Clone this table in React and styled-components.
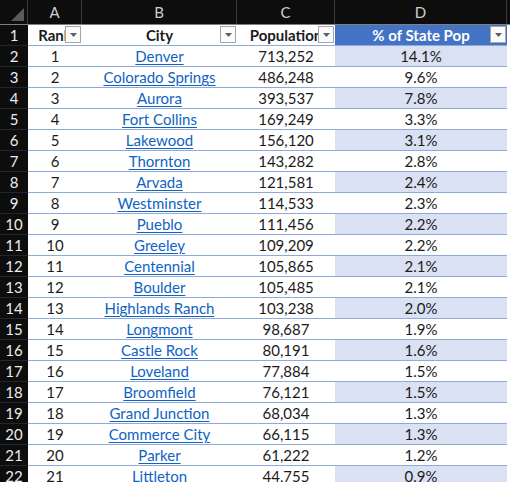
import React from "react";
import styled, { createGlobalStyle } from "styled-components";

const GlobalStyle = createGlobalStyle`
body {
  margin: 0;
  background: #ffffff;
  font-family: Lato, "Noto Sans", sans-serif;
}
`;

const COLS = "28px 54px 155px 98px 172px 1fr";

const Sheet = styled.div`
width: 510px;
height: 482px;
overflow: hidden;
background: #ffffff;
`;

const HeadRow = styled.div`
display: grid;
grid-template-columns: ${COLS};
height: 24px;
background: #0d0d0d;
border-bottom: 1px solid #7f7f7f;
`;

const Corner = styled.div`
position: relative;
border-right: 1px solid #3a3a3a;
`;

const CornerMark = styled.svg`
position: absolute;
right: 3px;
bottom: 3px;
`;

const ColLetter = styled.div`
display: flex;
align-items: center;
justify-content: center;
color: #cfcfcf;
font-size: 15px;
border-right: 1px solid #3a3a3a;
`;

const Row = styled.div`
display: grid;
grid-template-columns: ${COLS};
height: 21px;
`;

const RowNum = styled.div`
display: flex;
align-items: flex-end;
justify-content: center;
padding-bottom: 1px;
box-sizing: border-box;
background: #0d0d0d;
color: #ececec;
font-size: 15px;
border-bottom: 1px solid #262626;
`;

const Cell = styled.div`
position: relative;
display: flex;
align-items: flex-end;
justify-content: center;
padding-bottom: 1px;
box-sizing: border-box;
overflow: hidden;
white-space: nowrap;
font-size: 15px;
color: #1b1b1b;
background: ${(p) => (p.$shade ? "#d9e1f2" : p.$head ? "#4472c4" : "#ffffff")};
border-bottom: 1px solid #8ea9db;
`;

const Blank = styled.div`
background: #ffffff;
`;

const HeadText = styled.span`
font-weight: 700;
color: ${(p) => (p.$light ? "#ffffff" : "#1b1b1b")};
`;

const FilterButton = styled.div`
position: absolute;
right: 1px;
top: 1px;
width: 16px;
height: 17px;
box-sizing: border-box;
border: 1px solid #a6a6a6;
background: #fbfbfb;
display: flex;
align-items: center;
justify-content: center;
`;

const Link = styled.a`
color: #0f63c4;
text-decoration: underline;
text-underline-offset: 2px;
`;

const data = [
  ["Denver", "713,252", "14.1%"],
  ["Colorado Springs", "486,248", "9.6%"],
  ["Aurora", "393,537", "7.8%"],
  ["Fort Collins", "169,249", "3.3%"],
  ["Lakewood", "156,120", "3.1%"],
  ["Thornton", "143,282", "2.8%"],
  ["Arvada", "121,581", "2.4%"],
  ["Westminster", "114,533", "2.3%"],
  ["Pueblo", "111,456", "2.2%"],
  ["Greeley", "109,209", "2.2%"],
  ["Centennial", "105,865", "2.1%"],
  ["Boulder", "105,485", "2.1%"],
  ["Highlands Ranch", "103,238", "2.0%"],
  ["Longmont", "98,687", "1.9%"],
  ["Castle Rock", "80,191", "1.6%"],
  ["Loveland", "77,884", "1.5%"],
  ["Broomfield", "76,121", "1.5%"],
  ["Grand Junction", "68,034", "1.3%"],
  ["Commerce City", "66,115", "1.3%"],
  ["Parker", "61,222", "1.2%"],
  ["Littleton", "44,755", "0.9%"],
];

function Filter() {
  return (
    <FilterButton>
      <svg width="7" height="4" viewBox="0 0 7 4">
        <path d="M0 0 L7 0 L3.5 4 Z" fill="#5f5f5f" />
      </svg>
    </FilterButton>
  );
}

export default function App() {
  return (
    <Sheet>
      <GlobalStyle />
      <HeadRow>
        <Corner>
          <CornerMark width="13" height="13" viewBox="0 0 13 13">
            <path d="M13 0 L13 13 L0 13 Z" fill="#5a5a5a" />
          </CornerMark>
        </Corner>
        <ColLetter>A</ColLetter>
        <ColLetter>B</ColLetter>
        <ColLetter>C</ColLetter>
        <ColLetter>D</ColLetter>
        <div />
      </HeadRow>
      <Row>
        <RowNum>1</RowNum>
        <Cell>
          <HeadText>Rank</HeadText>
          <Filter />
        </Cell>
        <Cell>
          <HeadText>City</HeadText>
          <Filter />
        </Cell>
        <Cell>
          <HeadText>Population</HeadText>
          <Filter />
        </Cell>
        <Cell $head>
          <HeadText $light>% of State Pop</HeadText>
          <Filter />
        </Cell>
        <Blank />
      </Row>
      {data.map(([city, pop, pct], i) => (
        <Row key={city}>
          <RowNum>{i + 2}</RowNum>
          <Cell>{i + 1}</Cell>
          <Cell>
            <Link href="#">{city}</Link>
          </Cell>
          <Cell>{pop}</Cell>
          <Cell $shade={i % 2 === 0}>{pct}</Cell>
          <Blank />
        </Row>
      ))}
    </Sheet>
  );
}
